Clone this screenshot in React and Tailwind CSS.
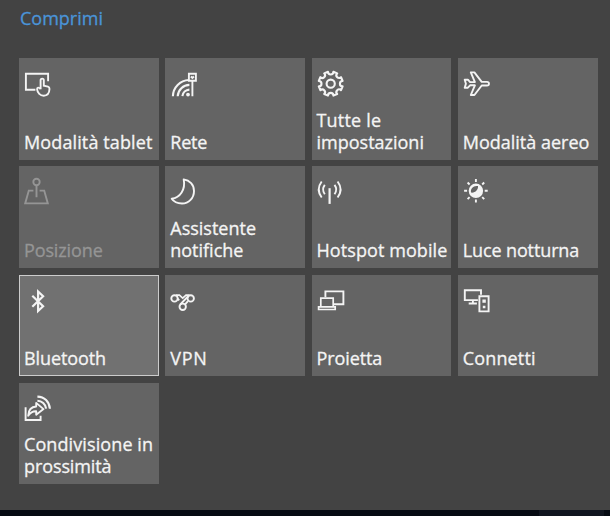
import React from "react";

const gearPath = (() => {
  const point = (a, r) => `${(19.3 + r * Math.cos(a)).toFixed(2)} ${(25.5 + r * Math.sin(a)).toFixed(2)}`;
  let d = "";
  for (let i = 0; i < 8; i++) {
    const base = (i * Math.PI) / 4 + Math.PI / 8;
    d += `${i ? "A2.6 2.6 0 0 0 " : "M"}${point(base - 0.17, 12.2)}L${point(base + 0.17, 12.2)}`;
  }
  return `${d}A2.6 2.6 0 0 0 ${point(Math.PI / 8 - 0.17, 12.2)}Z`;
})();

const icons = {
  tablet: (
    <>
      <path d="M17 31.5H7.5V15.5H29.7V23" />
      <path d="M22.2 31V22a1.6 1.6 0 0 1 3.2 0v5.5l4.2 1q1.6.5 1.5 2.3c-.2 4-1.8 6.7-5.8 6.7-3.4 0-6.3-2.7-6.6-6.5 0-1.8 1.5-2.2 3.5-.2z" />
    </>
  ),
  network: (
    <>
      <path d="M8.5 38A16.5 16.5 0 0 1 24.5 21.8M13.3 38A12 12 0 0 1 25 26.7M18 38A7.4 7.4 0 0 1 25 31.4" strokeWidth="2.1" />
      <path d="M24.5 15.5h7v7h-7zM28 23v15M26.5 18.3l1.5 1.5 1.5-1.5" />
      <circle cx="23.6" cy="36.4" r="1.9" fill="currentColor" stroke="none" />
    </>
  ),
  settings: (
    <>
      <path d={gearPath} strokeLinejoin="round" strokeWidth="2.1" />
      <circle cx="19.3" cy="25.5" r="4.1" strokeWidth="2.1" />
    </>
  ),
  airplane: (
    <path
      d="M7.3 21.5h3.2l2.2 2.4h4.8L13.4 14.2h3.6l7.3 9.5h5.3c2.6 0 2.6 3.6 0 3.6h-5.3L17 36.8h-3.6l4.1-9.7h-4.8l-2.2 2.4H7.3l1.2-4z"
      strokeLinejoin="round"
    />
  ),
  location: (
    <>
      <circle cx="18.1" cy="15.8" r="3.2" />
      <path d="M18.1 19v12M15 24.4h-4.6L6.8 37.2h22.6l-3.6-12.8h-4.6" />
    </>
  ),
  moon: <path d="M19.3 13.2c6 .8 10.3 5.5 10.3 11.5 0 7-5.2 12.6-12 12.6-4.6 0-8.3-1.7-10.3-4.7 8.5-1.2 14-9.2 12-19.4z" strokeLinejoin="round" />,
  hotspot: (
    <>
      <path d="M10.3 15.3q-6 8 0 16M26.2 15.3q6 8 0 16M13.4 18.7q-3.4 4.6 0 9.3M23.1 18.7q3.4 4.6 0 9.3" />
      <path d="M18.2 22v15.7" strokeWidth="2.2" />
    </>
  ),
  night: (
    <>
      <circle cx="18.5" cy="24.6" r="7.2" fill="currentColor" stroke="none" />
      <path d="M13.7 26.4c-1-4 2.5-7.4 6.9-6.5.4 3.7-2.7 7-6.9 6.5z" fill="#646464" stroke="none" />
      <path d="M18.5 12.8v3M18.5 33.4v3M6.7 24.6h3M27.3 24.6h3M10.2 16.3l2 2M24.8 30.9l2 2M10.2 32.9l2-2M24.8 18.3l2-2" />
    </>
  ),
  bluetooth: <path d="M13.9 20.5 24.7 31 19.7 35.8V16.3L24.7 21 13.9 31.5" strokeWidth="2.2" />,
  vpn: (
    <>
      <circle cx="10.1" cy="23.2" r="3.2" />
      <circle cx="26.3" cy="23.2" r="3.2" />
      <circle cx="18.3" cy="31.6" r="3.2" />
      <path d="M24 20.8 15.9 29.2M13.2 23.4l1.6 1.7M20.7 29.2l2.8-3.2" />
      <path d="M11.5 20h3.5l3.3 3 3.3-3h3.4" strokeWidth="1.7" />
    </>
  ),
  project: (
    <>
      <path d="M14 22V16.2h18v12.9h-9.5" />
      <path d="M9.4 31.5v-8.6h12.4v8.6M7.2 31.7h16.6v2.6H7.2z" strokeWidth="1.7" />
    </>
  ),
  connect: (
    <>
      <path d="M20.5 24.9H7.4V15h16.2v4.5M15.5 25v3M11.3 28.3h8.2" />
      <path d="M22 21h9.2v15.2H22z" />
      <path d="M25 24.2h3.4v3.4H25zM25.4 30.5h2.6v2.6h-2.6z" fill="currentColor" stroke="none" />
    </>
  ),
  share: (
    <>
      <path d="M7.2 24v12.8h15v-4.3" />
      <path d="M9.8 32.5c.3-5.7 3.4-9 8-9.2v-3.6l7.3 6.2-7.3 5.6v-3.4c-3.2-.2-5.8 1.3-8 4.4z" strokeLinejoin="round" />
      <path d="M19 13.4c7 .1 12 5.2 12.5 12.2M19 17.5c4.5.2 8.1 3.5 8.7 8" strokeWidth="2.1" />
    </>
  ),
};

const tiles = [
  { icon: "tablet", lines: [["Modalità tablet", "tracking-[0.12px]"]] },
  { icon: "network", lines: [["Rete", "tracking-[-0.2px]"]] },
  { icon: "settings", lines: [["Tutte le", "tracking-[0.2px]"], ["impostazioni", "tracking-[0px]"]] },
  { icon: "airplane", lines: [["Modalità aereo", "tracking-[0px]"]] },
  { icon: "location", disabled: true, lines: [["Posizione", "tracking-[-0.12px]"]] },
  { icon: "moon", lines: [["Assistente", "tracking-[0px]"], ["notifiche", "tracking-[0px]"]] },
  { icon: "hotspot", lines: [["Hotspot mobile", "tracking-[0.08px]"]] },
  { icon: "night", lines: [["Luce notturna", "tracking-[-0.12px]"]] },
  { icon: "bluetooth", hovered: true, lines: [["Bluetooth", "tracking-[-0.1px]"]] },
  { icon: "vpn", lines: [["VPN", "tracking-[0.7px]"]] },
  { icon: "project", lines: [["Proietta", "tracking-[-0.1px]"]] },
  { icon: "connect", lines: [["Connetti", "tracking-[0.15px]"]] },
  { icon: "share", lines: [["Condivisione in", "tracking-[0.1px]"], ["prossimità", "tracking-[-0.1px]"]] },
];

function Tile({ icon, lines, disabled, hovered }) {
  const surface = hovered ? "bg-[#717171] outline-1 -outline-offset-1 outline-[#cccccc]" : "bg-[#646464]";
  const tone = disabled ? "text-[#959595]" : "text-[#f4f4f4]";
  return (
    <button className={`flex flex-col items-start justify-between text-left ${surface} ${tone}`}>
      <svg width="40" height="42" viewBox="0.6 -0.2 40 42" fill="none" stroke="currentColor" strokeWidth="1.9" className="shrink-0">
        {icons[icon]}
      </svg>
      <span className="flex flex-col pb-[7.2px] pl-[5px] text-[18px] leading-[22px] whitespace-nowrap [-webkit-text-stroke:0.3px]">
        {lines.map(([text, tracking]) => (
          <span key={text} className={tracking}>{text}</span>
        ))}
      </span>
    </button>
  );
}

export default function App() {
  return (
    <div className="flex h-[516px] w-[610px] flex-col overflow-hidden bg-[#434343] font-['Open_Sans',sans-serif]">
      <header className="h-[58.4px] shrink-0 pt-[6px] pl-[20px]">
        <a className="text-[18px] leading-[24px] text-[#4a94d8] [-webkit-text-stroke:0.3px]">Comprimi</a>
      </header>
      <main className="ml-[19px] grid w-[578.5px] shrink-0 grid-cols-4 grid-rows-[repeat(4,101.6px)] gap-[6.5px]">
        {tiles.map((tile) => (
          <Tile key={tile.icon} {...tile} />
        ))}
      </main>
      <footer className="mt-auto flex h-[6px] shrink-0 bg-[#050a12]">
        <div className="ml-[539px] w-[65px] bg-[#10151f]" />
      </footer>
    </div>
  );
}
